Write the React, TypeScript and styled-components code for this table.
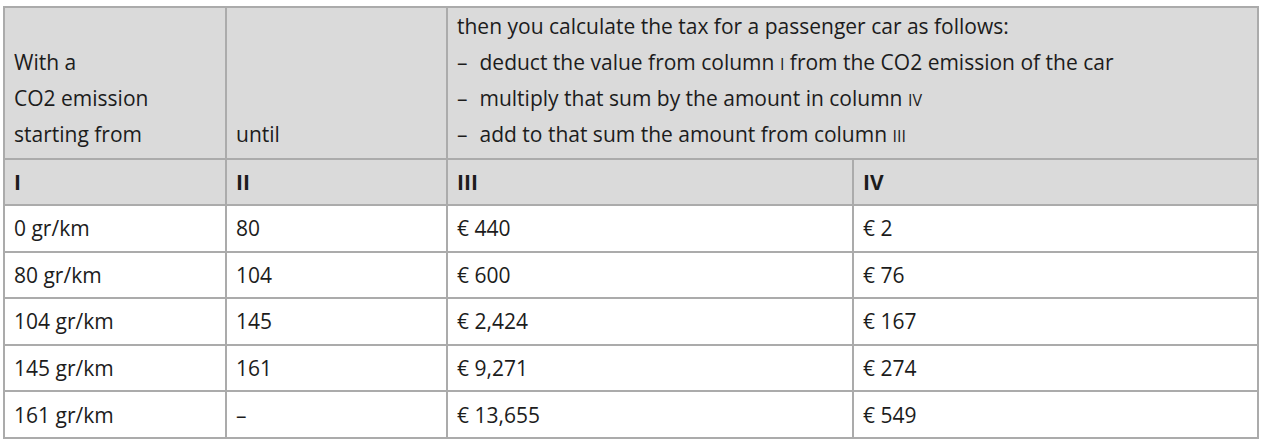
import React from "react";
import styled, { createGlobalStyle } from "styled-components";

const Global = createGlobalStyle`
  html, body { margin: 0; padding: 0; background: #ffffff; }
  body { font-family: "Open Sans", "Noto Sans", sans-serif; color: #1c1c1c; }
`;

const Wrap = styled.div`
  padding: 6px 0 0 3px;
`;

const Table = styled.table`
  width: 1254px;
  border-collapse: collapse;
  table-layout: fixed;
  font-size: 21px;
  line-height: 36px;
`;

const HeadCell = styled.th`
  background: #dadada;
  border: 2px solid #ababab;
  text-align: left;
  vertical-align: bottom;
  font-weight: 400;
  height: 147px;
  box-sizing: border-box;
  padding: 0 9px 6px 9px;
`;

const NumCell = styled.th`
  background: #dadada;
  border: 2px solid #ababab;
  text-align: left;
  vertical-align: middle;
  font-weight: 700;
  height: 44px;
  padding: 0 9px;
`;

const Cell = styled.td`
  border: 2px solid #ababab;
  vertical-align: middle;
  height: 44.6px;
  padding: 0 9px;
`;

const Calc = styled.div`
  line-height: 36px;
`;

const Step = styled.div`
  display: flex;
  gap: 12px;
`;

const Roman = styled.span`
  font-variant: small-caps;
  font-size: 1.1em;
  line-height: 1;
`;

const rows = [
  ["0 gr/km", "80", "€ 440", "€ 2"],
  ["80 gr/km", "104", "€ 600", "€ 76"],
  ["104 gr/km", "145", "€ 2,424", "€ 167"],
  ["145 gr/km", "161", "€ 9,271", "€ 274"],
  ["161 gr/km", "–", "€ 13,655", "€ 549"],
];

export default function App() {
  return (
    <Wrap>
      <Global />
      <Table>
        <colgroup>
          <col style={{ width: 222 }} />
          <col style={{ width: 221 }} />
          <col style={{ width: 406 }} />
          <col style={{ width: 405 }} />
        </colgroup>
        <thead>
          <tr>
            <HeadCell>
              With a<br />
              CO2 emission<br />
              starting from
            </HeadCell>
            <HeadCell>until</HeadCell>
            <HeadCell colSpan={2}>
              <Calc>
                <div>then you calculate the tax for a passenger car as follows:</div>
                <Step>
                  <span>–</span>
                  <span>
                    deduct the value from column <Roman>i</Roman> from the CO2 emission of the car
                  </span>
                </Step>
                <Step>
                  <span>–</span>
                  <span>
                    multiply that sum by the amount in column <Roman>iv</Roman>
                  </span>
                </Step>
                <Step>
                  <span>–</span>
                  <span>
                    add to that sum the amount from column <Roman>iii</Roman>
                  </span>
                </Step>
              </Calc>
            </HeadCell>
          </tr>
          <tr>
            <NumCell>I</NumCell>
            <NumCell>II</NumCell>
            <NumCell>III</NumCell>
            <NumCell>IV</NumCell>
          </tr>
        </thead>
        <tbody>
          {rows.map((r) => (
            <tr key={r[0]}>
              {r.map((c, i) => (
                <Cell key={i}>{c}</Cell>
              ))}
            </tr>
          ))}
        </tbody>
      </Table>
    </Wrap>
  );
}
